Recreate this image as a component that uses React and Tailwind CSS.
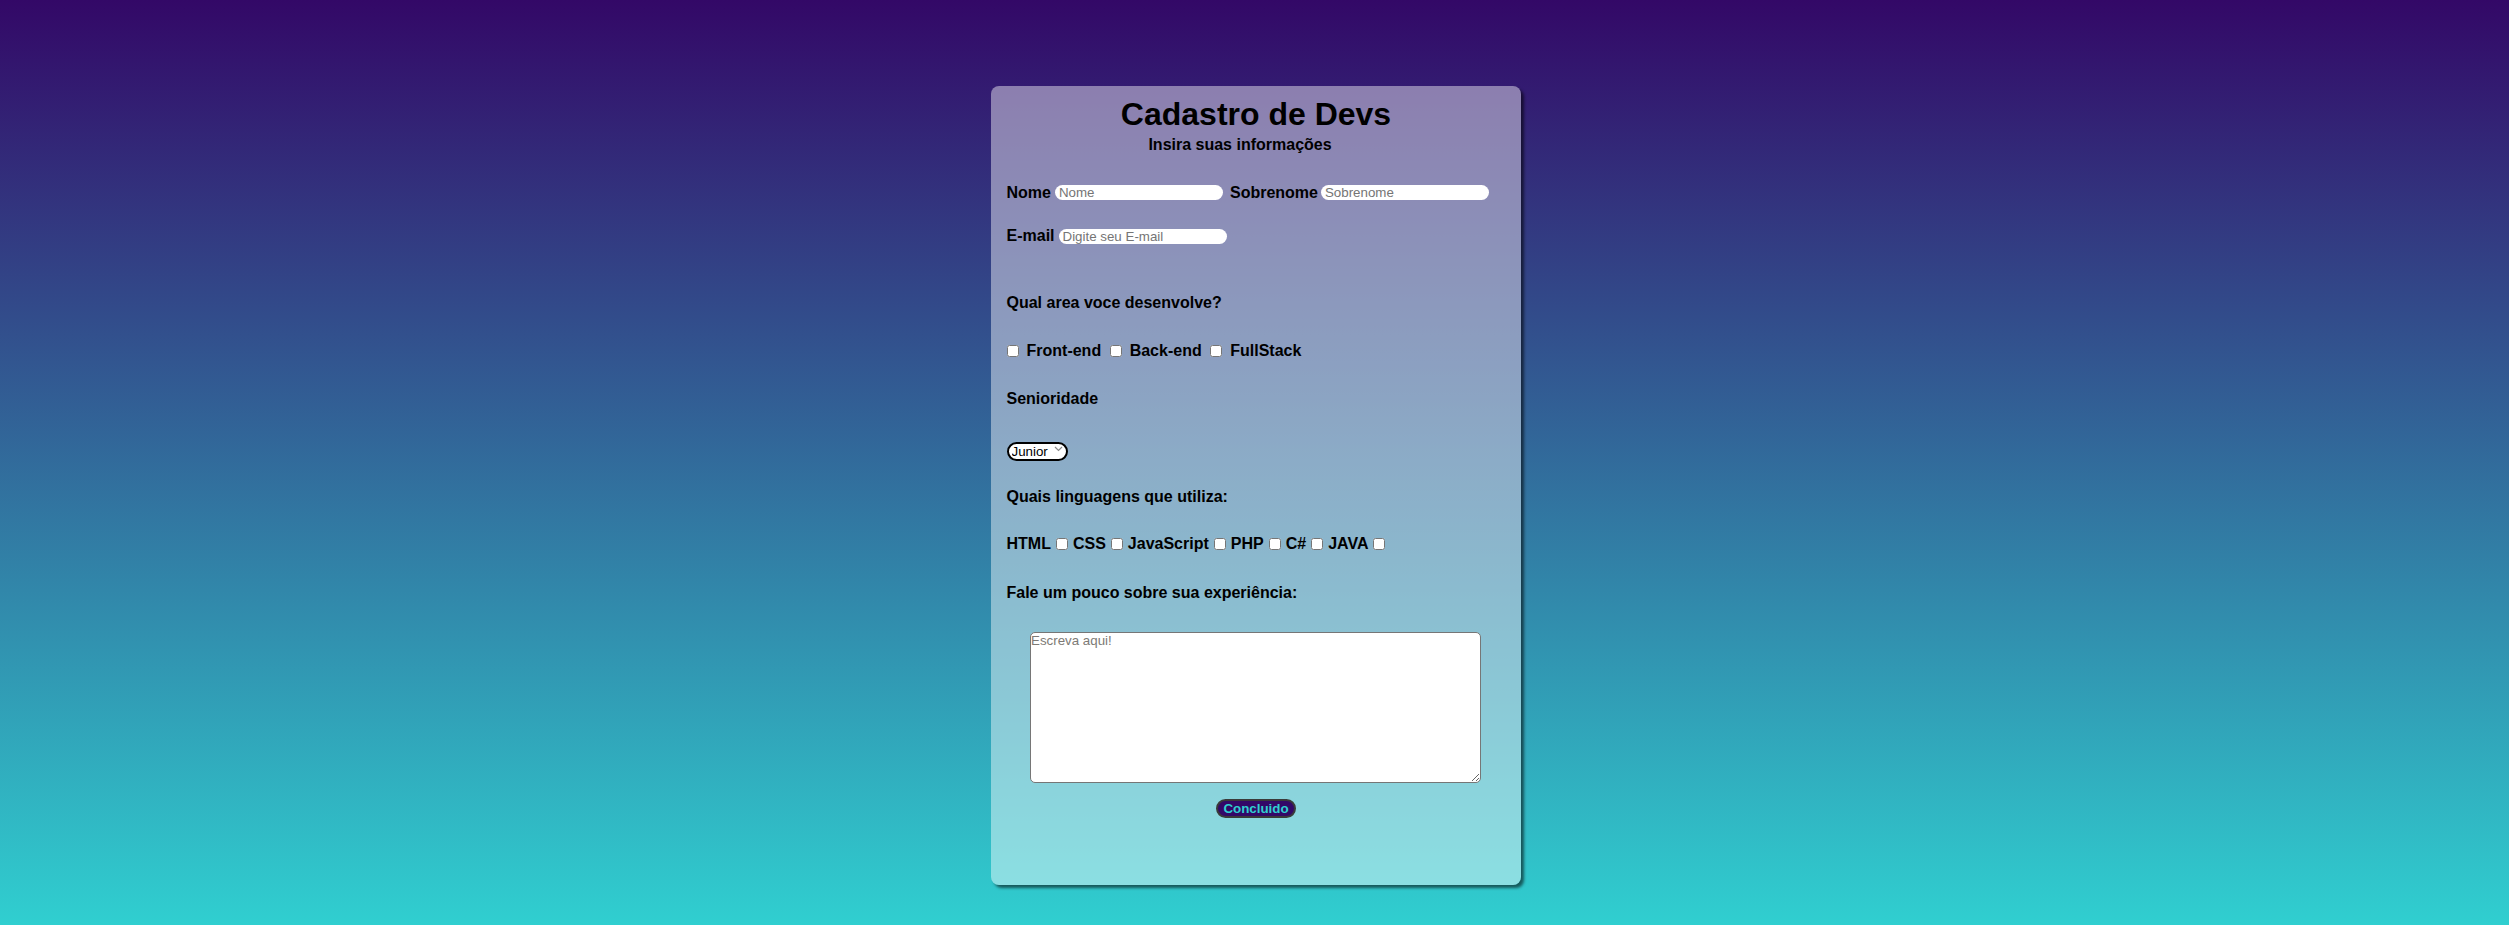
import React, { useState } from 'react';

const areas = ['Front-end', 'Back-end', 'FullStack'];
const linguagens = ['HTML', 'CSS', 'JavaScript', 'PHP', 'C#', 'JAVA'];

const App = () => {
  const [nivel, setNivel] = useState('Junior');

  return (
    <div className="w-full h-[925px] bg-[linear-gradient(to_top,#30cfd0,#330867)] pt-[86px] font-['Liberation_Sans',Arial,sans-serif] text-black">
      <div className="w-[530px] h-[799px] ml-[991px] rounded-lg bg-white/[0.44] shadow-[3px_3px_3px_rgba(0,0,0,0.55)] pt-[10px]">
        <h1 className="text-center text-[32px] leading-[37px] font-bold">Cadastro de Devs</h1>
        <h4 className="text-center pr-[32px] mt-[2.5px] text-[16px] leading-[18px] font-bold">Insira suas informações</h4>

        <div className="pl-[15.5px]">
          <div className="flex items-center h-[18px] mt-[30px] text-[16px] font-bold">
            <label>Nome</label>
            <input
              type="text"
              placeholder="Nome"
              className="ml-[4px] w-[168px] h-[15px] rounded-full bg-white pl-[4px] text-[13.33px] font-normal leading-[15px] placeholder:text-[#757575] outline-none"
            />
            <label className="ml-[7px]">Sobrenome</label>
            <input
              type="text"
              placeholder="Sobrenome"
              className="ml-[3px] w-[168px] h-[15px] rounded-full bg-white pl-[4px] text-[13.33px] font-normal leading-[15px] placeholder:text-[#757575] outline-none"
            />
          </div>

          <div className="flex items-center h-[18px] mt-[25.5px] text-[16px] font-bold">
            <label>E-mail</label>
            <input
              type="email"
              placeholder="Digite seu E-mail"
              className="ml-[4px] w-[168px] h-[15px] rounded-full bg-white pl-[4px] text-[13.33px] font-normal leading-[15px] placeholder:text-[#757575] outline-none"
            />
          </div>

          <p className="mt-[49px] h-[18px] leading-[18px] text-[16px] font-bold">Qual area voce desenvolve?</p>

          <div className="flex items-center h-[18px] mt-[30px] text-[16px] font-bold">
            {areas.map((a) => (
              <React.Fragment key={a}>
                <input type="checkbox" className="m-0 mr-[8px] w-[12px] h-[12px]" />
                <span className="mr-[8.5px]">{a}</span>
              </React.Fragment>
            ))}
          </div>

          <p className="mt-[30px] h-[18px] leading-[18px] text-[16px] font-bold">Senioridade</p>

          <div className="relative w-[61px] h-[19px] mt-[30.75px]">
            <select
              value={nivel}
              onChange={(e) => setNivel(e.target.value)}
              className="appearance-none w-full h-full rounded-full border-2 border-black bg-white pl-[3px] text-[13.33px] leading-[15px] outline-none"
            >
              <option>Junior</option>
              <option>Pleno</option>
              <option>Senior</option>
            </select>
            <svg className="absolute right-[5px] top-[7px] pointer-events-none" width="9" height="6" viewBox="0 0 9 6" fill="none">
              <path d="M1 1l3.5 3.5L8 1" stroke="#8a8a8a" strokeWidth="1.2" />
            </svg>
          </div>

          <p className="mt-[29.75px] h-[18px] leading-[18px] text-[16px] font-bold">Quais linguagens que utiliza:</p>

          <div className="flex items-center gap-[5px] h-[18px] mt-[29.5px] text-[16px] font-bold">
            {linguagens.map((l) => (
              <React.Fragment key={l}>
                <span>{l}</span>
                <input type="checkbox" className="m-0 w-[12px] h-[12px]" />
              </React.Fragment>
            ))}
          </div>

          <p className="mt-[30.5px] h-[18px] leading-[18px] text-[16px] font-bold">Fale um pouco sobre sua experiência:</p>

          <textarea
            placeholder="Escreva aqui!"
            className="block mt-[30.25px] ml-[23.5px] w-[451px] h-[151px] rounded-[5px] border border-[#767676] bg-white text-[13.33px] leading-[15px] placeholder:text-[#7d7a75] outline-none"
          />
        </div>

        <button className="block mx-auto mt-[16px] h-[19px] px-[5px] rounded-full border-2 border-[#3a3a3a] bg-[#330867] text-[#30cfd0] text-[13.33px] leading-[15px] font-bold">
          Concluido
        </button>
      </div>
    </div>
  );
};

export default App;
